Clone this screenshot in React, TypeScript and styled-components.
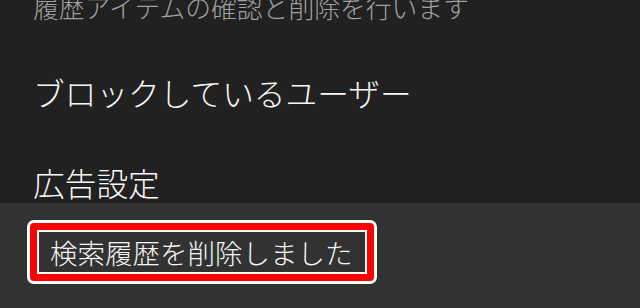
import React from "react";
import styled, { createGlobalStyle } from "styled-components";

const GlobalStyle = createGlobalStyle`
  html, body {
    margin: 0;
    padding: 0;
    background: #212121;
  }
  body {
    font-family: "Noto Sans CJK JP", "Noto Sans", sans-serif;
    font-weight: 200;
  }
`;

const Page = styled.div`
  position: relative;
  width: 640px;
  height: 308px;
  overflow: hidden;
  background: #212121;
`;

// list is scrolled: only the tail of the first item shows
const List = styled.div`
  display: flex;
  flex-direction: column;
  margin-top: -8px;
`;

const Item = styled.div<{ $partial?: boolean }>`
  display: flex;
  flex-direction: column;
  justify-content: ${({ $partial }) => ($partial ? "flex-start" : "center")};
  height: ${({ $partial }) => ($partial ? "55px" : "90px")};
  padding: 0 33px;
  box-sizing: border-box;
`;

const Title = styled.div`
  font-size: 31.7px;
  line-height: 36px;
  color: #f7f7f7;
  white-space: nowrap;
`;

const Subtitle = styled.div`
  font-size: 25.8px;
  line-height: 30px;
  color: #a0a0a0;
  white-space: nowrap;
`;

const Snackbar = styled.div`
  position: absolute;
  left: 0;
  right: 0;
  top: 203px;
  bottom: 0;
  background: #323232;
  padding: 17px 0 0 27px;
`;

const Highlight = styled.div`
  display: inline-block;
  border: 3px solid #ffffff;
  border-radius: 7px;
  background: #ff0000;
  padding: 7px;
`;

const Message = styled.div`
  border: 2px solid #ffffff;
  background: #323232;
  padding: 2px 12px 2px 11px;
  font-size: 27.5px;
  line-height: 36px;
  color: #f5f5f5;
  white-space: nowrap;
`;

const items = [
  { subtitle: "履歴アイテムの確認と削除を行います" },
  { title: "ブロックしているユーザー" },
  { title: "広告設定" },
];

const App = () => {
  return (
    <Page>
      <GlobalStyle />
      <List>
        {items.map((item, i) => (
          <Item key={i} $partial={!item.title}>
            {item.title && <Title>{item.title}</Title>}
            {item.subtitle && <Subtitle>{item.subtitle}</Subtitle>}
          </Item>
        ))}
      </List>
      <Snackbar>
        <Highlight>
          <Message>検索履歴を削除しました</Message>
        </Highlight>
      </Snackbar>
    </Page>
  );
};

export default App;
